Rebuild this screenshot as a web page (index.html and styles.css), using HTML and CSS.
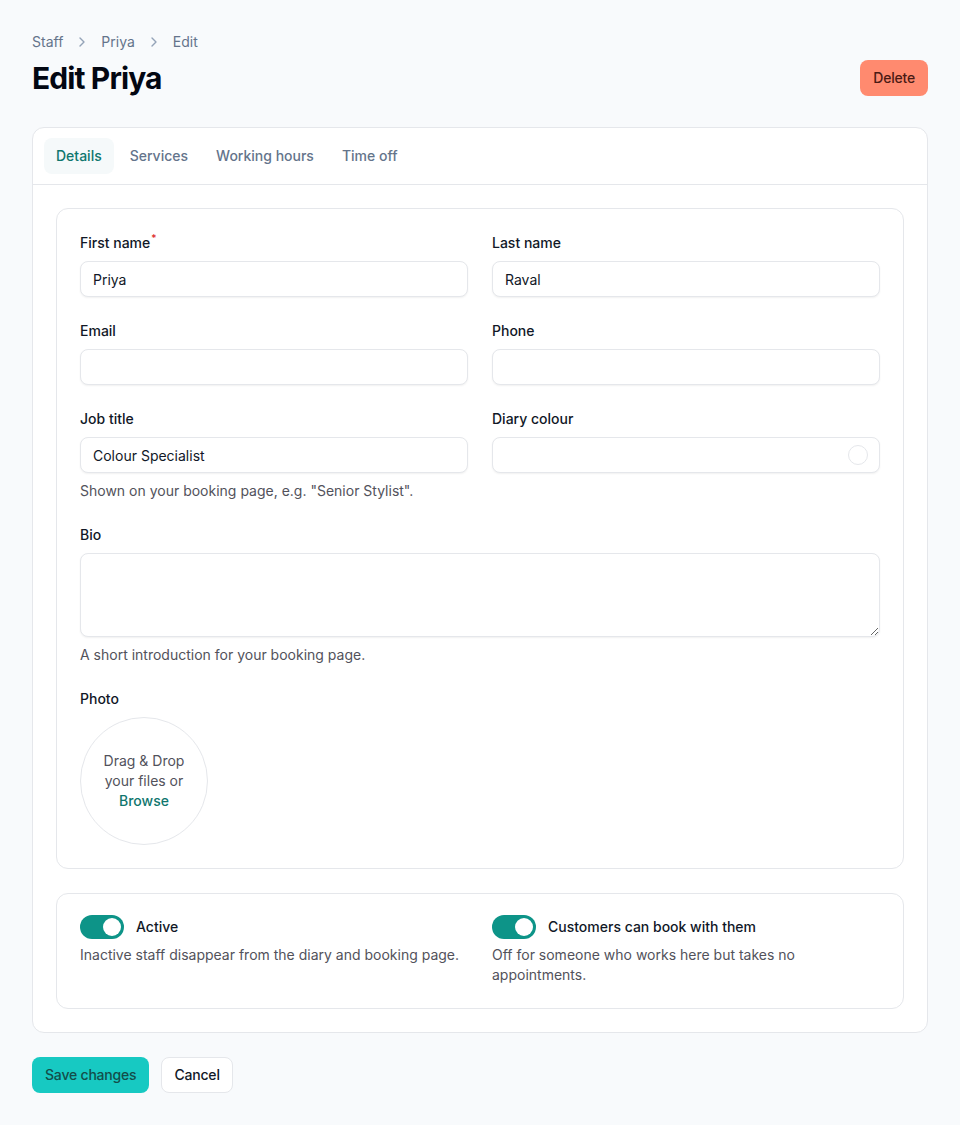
FILE: index.html
```html
<!DOCTYPE html>
<html lang="en">
<head>
<meta charset="utf-8">
<title>Edit Priya</title>
<link rel="stylesheet" href="styles.css">
</head>
<body>
<div class="page">
  <header class="page-header">
    <nav class="breadcrumb">
      <a href="#">Staff</a>
      <svg class="chev" viewBox="0 0 16 16" width="16" height="16"><path d="M6 4l4 4-4 4" fill="none" stroke="currentColor" stroke-width="1.4" stroke-linecap="round" stroke-linejoin="round"/></svg>
      <a href="#">Priya</a>
      <svg class="chev" viewBox="0 0 16 16" width="16" height="16"><path d="M6 4l4 4-4 4" fill="none" stroke="currentColor" stroke-width="1.4" stroke-linecap="round" stroke-linejoin="round"/></svg>
      <span>Edit</span>
    </nav>
    <div class="title-row">
      <h1>Edit Priya</h1>
      <button class="btn btn-danger" type="button">Delete</button>
    </div>
  </header>

  <div class="card">
    <div class="tabs">
      <button class="tab active" type="button">Details</button>
      <button class="tab" type="button">Services</button>
      <button class="tab" type="button">Working hours</button>
      <button class="tab" type="button">Time off</button>
    </div>
    <div class="card-body">
      <section class="section">
        <div class="grid">
          <div class="field">
            <label>First name<sup class="req">*</sup></label>
            <input class="input" type="text" value="Priya">
          </div>
          <div class="field">
            <label>Last name</label>
            <input class="input" type="text" value="Raval">
          </div>
          <div class="field">
            <label>Email</label>
            <input class="input" type="text" value="">
          </div>
          <div class="field">
            <label>Phone</label>
            <input class="input" type="text" value="">
          </div>
          <div class="field">
            <label>Job title</label>
            <input class="input" type="text" value="Colour Specialist">
            <p class="help">Shown on your booking page, e.g. "Senior Stylist".</p>
          </div>
          <div class="field">
            <label>Diary colour</label>
            <div class="input color-input"><span class="swatch"></span></div>
          </div>
          <div class="field full">
            <label>Bio</label>
            <textarea class="input textarea"></textarea>
            <p class="help">A short introduction for your booking page.</p>
          </div>
          <div class="field full">
            <label>Photo</label>
            <div class="dropzone">
              <span>Drag &amp; Drop<br>your files or<br><a href="#">Browse</a></span>
            </div>
          </div>
        </div>
      </section>

      <section class="section toggles">
        <div class="toggle-field">
          <div class="toggle-row">
            <span class="switch on"><span class="knob"></span></span>
            <span class="toggle-label">Active</span>
          </div>
          <p class="help">Inactive staff disappear from the diary and booking page.</p>
        </div>
        <div class="toggle-field">
          <div class="toggle-row">
            <span class="switch on"><span class="knob"></span></span>
            <span class="toggle-label">Customers can book with them</span>
          </div>
          <p class="help">Off for someone who works here but takes no appointments.</p>
        </div>
      </section>
    </div>
  </div>

  <div class="actions">
    <button class="btn btn-primary" type="button">Save changes</button>
    <button class="btn btn-secondary" type="button">Cancel</button>
  </div>
</div>
</body>
</html>
```

FILE: styles.css
```css
* { box-sizing: border-box; }

html, body {
  margin: 0;
  padding: 0;
  background: #f8fafc;
}

body {
  font-family: Inter, "Noto Sans", "Liberation Sans", sans-serif;
  font-size: 14px;
  line-height: 20px;
  color: #111827;
}

.page {
  padding: 32px 32px 32px;
}

.breadcrumb {
  display: flex;
  align-items: center;
  gap: 8px;
  height: 20px;
  color: #64748b;
  font-size: 14px;
}

.breadcrumb a,
.breadcrumb span {
  color: #64748b;
  text-decoration: none;
}

.breadcrumb .chev {
  color: #94a3b8;
  margin: 0 3px;
}

.title-row {
  display: flex;
  align-items: center;
  justify-content: space-between;
  margin-top: 8px;
}

h1 {
  margin: 0;
  font-size: 30px;
  line-height: 36px;
  font-weight: 700;
  letter-spacing: -0.9px;
  color: #030712;
}

.btn {
  font-family: inherit;
  font-size: 14px;
  line-height: 20px;
  height: 36px;
  padding: 0 12px;
  border-radius: 8px;
  border: 1px solid transparent;
  cursor: pointer;
  font-weight: 500;
  letter-spacing: -0.2px;
}

.btn-danger {
  background: #ff8a6f;
  color: #4a1a14;
}

.btn-primary {
  background: #17c9c2;
  color: #134e4a;
}

.btn-secondary {
  background: #ffffff;
  border-color: #e5e7eb;
  color: #111827;
}

.card {
  margin-top: 31px;
  background: #ffffff;
  border: 1px solid #e5e7eb;
  border-radius: 12px;
}

.tabs {
  display: flex;
  gap: 4px;
  padding: 10px 11px;
  border-bottom: 1px solid #e5e7eb;
}

.tab {
  font-family: inherit;
  font-size: 14px;
  line-height: 20px;
  height: 36px;
  padding: 0 12px;
  border: 0;
  border-radius: 8px;
  background: transparent;
  color: #64748b;
  font-weight: 500;
}

.tab.active {
  background: #f5f9fa;
  color: #0f766e;
}

.card-body {
  padding: 23px;
  display: flex;
  flex-direction: column;
  gap: 24px;
}

.section {
  border: 1px solid #e5e7eb;
  border-radius: 12px;
  padding: 24px 23px 23px;
  background: #ffffff;
}

.grid {
  display: grid;
  grid-template-columns: 1fr 1fr;
  column-gap: 24px;
  row-gap: 24px;
}

.field {
  display: flex;
  flex-direction: column;
}

.field.full {
  grid-column: 1 / -1;
}

.field label {
  display: block;
  font-weight: 500;
  font-size: 14px;
  line-height: 20px;
  color: #111827;
  margin-bottom: 8px;
}

.req {
  color: #dc2626;
  font-size: 10px;
  line-height: 0;
  vertical-align: 6px;
  margin-left: 1px;
}

.input {
  display: block;
  width: 100%;
  height: 36px;
  font-family: inherit;
  font-size: 14px;
  color: #111827;
  padding: 0 12px;
  background: #ffffff;
  border: 1px solid #e5e7eb;
  border-radius: 8px;
  box-shadow: 0 1px 2px rgba(0, 0, 0, 0.06);
  outline: none;
}

.color-input {
  display: flex;
  align-items: center;
  justify-content: flex-end;
}

.swatch {
  width: 20px;
  height: 20px;
  border-radius: 50%;
  border: 1px solid #e5e7eb;
  margin-right: -1px;
}

.textarea {
  height: 84px;
  padding: 8px 12px;
  resize: vertical;
}

.help {
  margin: 8px 0 0;
  font-size: 14px;
  line-height: 20px;
  color: #52525b;
}

.dropzone {
  width: 128px;
  height: 128px;
  border-radius: 50%;
  border: 1px solid #e5e7eb;
  display: flex;
  align-items: center;
  justify-content: center;
  text-align: center;
  color: #52525b;
  background: #ffffff;
}

.dropzone a {
  color: #0f766e;
  text-decoration: none;
  font-weight: 500;
}

.toggles {
  display: grid;
  grid-template-columns: 1fr 1fr;
  column-gap: 24px;
  padding: 21px 23px 23px;
}

.toggle-row {
  display: flex;
  align-items: center;
  gap: 12px;
  height: 24px;
}

.toggle-label {
  font-weight: 500;
  color: #111827;
}

.toggle-field .help {
  margin-top: 6px;
}

.switch {
  position: relative;
  width: 44px;
  height: 24px;
  border-radius: 12px;
  background: #e5e7eb;
  flex: none;
}

.switch.on {
  background: #0d9488;
}

.knob {
  position: absolute;
  top: 3px;
  left: 3px;
  width: 18px;
  height: 18px;
  border-radius: 50%;
  background: #ffffff;
}

.switch.on .knob {
  left: 23px;
}

.actions {
  display: flex;
  gap: 12px;
  margin-top: 24px;
}
```
